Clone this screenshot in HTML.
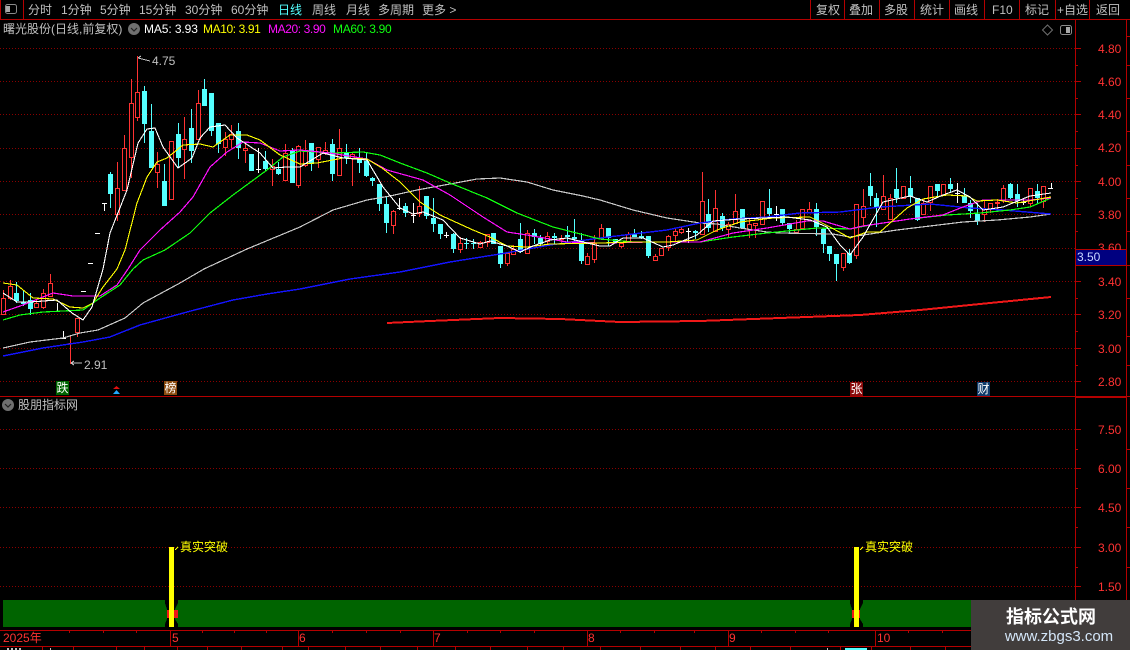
<!DOCTYPE html>
<html><head><meta charset="utf-8"><title>K线</title>
<style>
html,body{margin:0;padding:0;background:#000;}
#p{position:relative;width:1130px;height:650px;overflow:hidden;background:#000;font-family:"Liberation Sans","WenQuanYi Zen Hei","Noto Sans CJK SC",sans-serif;font-size:12px;color:#c0c0c0;}
#p div{position:absolute;white-space:nowrap;line-height:14px;}
svg{position:absolute;left:0;top:0;}
.r{color:#ff3232;left:1098px;}
.t{top:3px;}
.m{top:631px;color:#ff3232;}
.b{width:13px;height:14px;color:#fff;text-align:center;}
</style></head><body><div id="p">
<svg width="1130" height="650" viewBox="0 0 1130 650">
<g shape-rendering="crispEdges" fill="none">
<!-- grid -->
<path stroke="#8a0000" stroke-dasharray="1 2" d="M0 48.5H1075M0 81.5H1075M0 114.5H1075M0 148.5H1075M0 181.5H1075M0 214.5H1075M0 248.5H1075M0 281.5H1075M0 314.5H1075M0 348.5H1075M0 381.5H1075M0 429.5H1075M0 468.5H1075M0 507.5H1075M0 547.5H1075M0 586.5H1075"/>
<!-- red wicks -->
<path stroke="#ff3232" d="M3.5 290V315M10.5 280V300M36.5 300V307M43.5 289V309M50.5 274V297M70.5 335V364M77.5 318V337M117.5 162V221M124.5 135V190M131.5 79V178M137.5 56V121M157.5 152V188M184.5 117V179M198.5 90V139M225.5 132V156M231.5 125V148M245.5 144V163M272.5 159V186M285.5 144V180M298.5 145V188M305.5 140V167M318.5 147V168M325.5 142V155M339.5 129V175M352.5 153V186M393.5 210V234M419.5 186V217M460.5 237V253M480.5 241V248M487.5 234V247M507.5 252V266M513.5 245V255M527.5 230V254M547.5 232V244M561.5 235V244M587.5 253V264M594.5 235V263M601.5 224V240M621.5 243V248M628.5 232V242M655.5 254V261M668.5 235V251M675.5 229V242M681.5 227V234M702.5 172V234M715.5 190V231M728.5 222V238M735.5 194V223M749.5 219V238M755.5 223V238M796.5 220V232M809.5 202V213M843.5 253V271M856.5 204V259M863.5 189V227M883.5 175V209M890.5 194V219M923.5 199V214M930.5 186V211M984.5 200V222M990.5 203V213M997.5 199V212M1003.5 185V203M1030.5 188V207M1043.5 186V208"/>
<!-- red bodies -->
<path stroke="#ff3232" fill="#000" d="M1.5 298.5h4v16h-4zM8.5 286.5h4v12h-4zM34.5 303.5h4v4h-4zM41.5 293.5h4v14h-4zM48.5 283.5h4v13h-4zM68.5 343.5h4v0h-4zM75.5 318.5h4v14h-4zM115.5 188.5h4v26h-4zM122.5 148.5h4v42h-4zM129.5 103.5h4v54h-4zM135.5 92.5h4v25h-4zM155.5 164.5h4v8h-4zM169.5 141.5h4v58h-4zM182.5 139.5h4v10h-4zM196.5 103.5h4v36h-4zM223.5 139.5h4v8h-4zM229.5 134.5h4v5h-4zM243.5 148.5h4v2h-4zM270.5 166.5h4v3h-4zM283.5 153.5h4v27h-4zM296.5 146.5h4v39h-4zM303.5 150.5h4v15h-4zM316.5 147.5h4v12h-4zM323.5 150.5h4v3h-4zM337.5 148.5h4v27h-4zM350.5 154.5h4v4h-4zM391.5 211.5h4v14h-4zM417.5 206.5h4v7h-4zM458.5 243.5h4v6h-4zM478.5 242.5h4v5h-4zM485.5 234.5h4v8h-4zM505.5 253.5h4v10h-4zM511.5 249.5h4v5h-4zM525.5 233.5h4v20h-4zM545.5 236.5h4v5h-4zM559.5 238.5h4v1h-4zM585.5 256.5h4v8h-4zM592.5 243.5h4v16h-4zM599.5 228.5h4v10h-4zM619.5 243.5h4v3h-4zM626.5 234.5h4v8h-4zM653.5 256.5h4v4h-4zM659.5 248.5h4v7h-4zM666.5 236.5h4v11h-4zM673.5 231.5h4v4h-4zM679.5 229.5h4v3h-4zM700.5 201.5h4v33h-4zM713.5 208.5h4v23h-4zM726.5 224.5h4v5h-4zM733.5 211.5h4v12h-4zM747.5 224.5h4v5h-4zM753.5 223.5h4v2h-4zM760.5 201.5h4v23h-4zM794.5 229.5h4v3h-4zM800.5 209.5h4v19h-4zM807.5 209.5h4v3h-4zM841.5 253.5h4v14h-4zM854.5 204.5h4v51h-4zM861.5 206.5h4v11h-4zM881.5 196.5h4v13h-4zM888.5 198.5h4v21h-4zM901.5 186.5h4v12h-4zM921.5 203.5h4v11h-4zM928.5 186.5h4v16h-4zM941.5 184.5h4v11h-4zM982.5 209.5h4v5h-4zM988.5 203.5h4v6h-4zM995.5 202.5h4v1h-4zM1001.5 188.5h4v12h-4zM1028.5 188.5h4v15h-4zM1041.5 186.5h4v15h-4z"/>
<!-- cyan wicks -->
<path stroke="#54ffff" d="M16.5 282V303M23.5 291V306M30.5 293V315M110.5 172V208M144.5 86V143M151.5 104V168M164.5 164V206M178.5 123V167M191.5 109V163M204.5 79V106M211.5 93V136M218.5 123V153M238.5 123V159M265.5 151V171M278.5 162V175M292.5 148V183M311.5 143V171M332.5 139V181M346.5 144V164M359.5 148V173M366.5 153V177M372.5 177V186M379.5 184V211M386.5 197V233M405.5 203V217M426.5 196V219M433.5 198V232M440.5 224V239M453.5 233V253M466.5 238V249M473.5 239V249M500.5 246V268M520.5 223V253M534.5 229V244M540.5 235V246M554.5 233V244M567.5 226V243M574.5 219V242M581.5 233V264M608.5 228V246M634.5 229V237M641.5 231V239M648.5 236V258M695.5 230V239M708.5 199V232M722.5 213V231M769.5 189V217M782.5 209V225M789.5 223V233M816.5 203V236M823.5 229V253M829.5 246V261M836.5 254V281M849.5 249V264M870.5 173V206M876.5 193V227M896.5 168V203M910.5 176V203M917.5 198V221M937.5 184V198M950.5 178V193M964.5 188V203M970.5 200V218M977.5 203V225M1010.5 183V199M1017.5 184V207M1037.5 184V203"/>
<!-- cyan bodies -->
<path fill="#54ffff" d="M14 293h5v8h-5zM21 302h5v2h-5zM28 300h5v9h-5zM108 174h5v20h-5zM142 91h5v33h-5zM149 131h5v37h-5zM162 181h5v25h-5zM176 134h5v24h-5zM189 128h5v23h-5zM202 89h5v17h-5zM209 93h5v38h-5zM216 123h5v21h-5zM236 131h5v17h-5zM249 154h5v17h-5zM263 161h5v8h-5zM276 169h5v5h-5zM290 151h5v32h-5zM309 143h5v21h-5zM330 144h5v30h-5zM344 153h5v5h-5zM357 158h5v5h-5zM364 161h5v15h-5zM370 178h5v3h-5zM377 184h5v20h-5zM384 204h5v19h-5zM403 206h5v7h-5zM424 196h5v20h-5zM431 218h5v6h-5zM438 224h5v10h-5zM451 234h5v15h-5zM464 243h5v1h-5zM471 243h5v1h-5zM491 233h5v11h-5zM498 246h5v18h-5zM518 239h5v13h-5zM532 233h5v4h-5zM538 238h5v6h-5zM552 236h5v2h-5zM565 235h5v2h-5zM572 237h5v2h-5zM579 240h5v21h-5zM606 228h5v10h-5zM613 239h5v4h-5zM632 234h5v3h-5zM639 236h5v2h-5zM646 236h5v20h-5zM693 231h5v2h-5zM706 214h5v14h-5zM720 216h5v12h-5zM740 209h5v19h-5zM767 208h5v6h-5zM780 209h5v14h-5zM787 223h5v6h-5zM814 209h5v18h-5zM821 229h5v15h-5zM827 246h5v8h-5zM834 254h5v10h-5zM847 253h5v10h-5zM868 186h5v10h-5zM874 198h5v9h-5zM894 189h5v9h-5zM908 188h5v9h-5zM915 198h5v22h-5zM935 184h5v7h-5zM948 184h5v5h-5zM962 196h5v7h-5zM968 203h5v8h-5zM975 214h5v7h-5zM1008 184h5v14h-5zM1015 194h5v7h-5zM1035 191h5v7h-5z"/>
<!-- white dojis -->
<path stroke="#fff" d="M57.5 303V311M63.5 331V338M60 338.5H66M81 291.5H86M88 263.5H93M95 233.5H100M104.5 203V211M102 203.5H107M258.5 148V173M256 169.5H261M399.5 198V210M397 208.5H402M413.5 203V223M411 215.5H416M446.5 232V238M444 235.5H449M688.5 228V243M686 231.5H691M776.5 206V221M774 214.5H779M957.5 183V203M955 193.5H960M1023.5 199V205M1021 202.5H1026M1051.5 183V188M1048 188.5H1053"/>
<!-- long MAs -->
<polyline stroke="#c8c8c8" stroke-width="1.2" points="3,348 30,342 63,338 80,333 98,330 125,318 143,303 180,283 204,269 247,249 300,227 333,210 367,200 390,196 417,190 450,184 477,179 500,178 527,182 553,190 583,196 600,200 633,210 667,218 700,223 717,224 740,228 767,232 780,233 833,234 850,237 870,234 897,230 930,226 963,222 997,220 1030,217 1051,214"/>
<polyline stroke="#1414ff" stroke-width="1.4" points="3,356 43,348 83,342 110,337 140,325 187,312 233,300 267,294 300,289 350,279 400,272 450,262 500,254 550,245 600,238 633,234 667,230 700,223 733,219 767,217 800,213 840,212 880,207 930,204 970,208 1003,210 1051,214"/>
<polyline stroke="#f01818" stroke-width="2" points="387,323 430,321 500,318 560,319 620,322 700,321 780,318 860,315 920,310 980,304 1051,297"/>
<polyline stroke="#10ff10" stroke-width="1.2" points="3,320 20,315 43,312 83,310 100,298 120,285 133,269 143,260 165,250 190,233 210,213 233,195 267,170 283,157 300,151 333,153 363,152 380,155 400,163 427,173 450,183 487,198 517,213 553,227 600,239 633,242 700,242 733,237 767,233 817,228 850,229 870,225 910,219 947,215 980,213 1010,210 1030,207 1051,198"/>
<polyline stroke="#ff10ff" stroke-width="1.2" points="3,312 23,305 53,293 73,296 100,296 117,285 128,269 140,250 160,230 180,212 193,197 210,167 227,152 243,142 260,143 280,151 300,150 330,153 367,159 387,170 423,180 450,195 483,217 507,232 527,235 567,242 600,243 650,242 700,242 733,233 767,228 807,221 823,221 850,229 863,226 910,219 943,215 963,207 983,200 1030,200 1051,198"/>
<polyline stroke="#ffff00" stroke-width="1.1" points="3,283 17,285 33,298 53,299 70,307 83,308 93,303 103,287 117,269 125,250 137,203 147,177 157,162 167,158 183,145 200,144 213,147 230,135 247,135 260,140 280,155 300,164 317,163 343,158 367,159 382,168 400,182 420,202 440,215 473,230 490,237 507,246 527,247 550,244 600,243 633,242 667,242 697,240 717,230 740,222 773,218 810,217 830,227 850,238 867,232 880,232 907,208 923,199 947,195 967,196 977,201 997,200 1017,203 1051,197"/>
<polyline stroke="#ffffff" stroke-width="1.1" points="3,293 17,302 30,302 57,300 72,313 83,320 92,307 103,269 110,233 127,190 138,143 147,129 155,128 163,147 178,168 192,158 200,138 210,127 225,125 237,138 260,153 273,168 287,167 300,167 323,153 343,158 367,160 383,187 400,208 413,214 423,212 443,220 460,238 480,244 490,241 507,246 520,252 533,246 550,240 567,238 583,242 600,246 610,246 623,238 643,238 663,247 673,245 697,235 713,221 740,219 763,218 787,217 810,220 827,227 840,245 850,255 863,237 883,202 910,196 927,202 943,195 957,190 970,197 983,210 1003,207 1030,196 1051,193"/>
<!-- high/low markers -->
<path stroke="#c0c0c0" d="M138 58L150 61M138 58L141 56M71 363H82M71 363L74 361M71 363L74 365"/>
<!-- lower panel -->
<path fill="#006400" d="M3 600H165V603L167 609V619L165 624V627H3zM178 600H850V603L852 609V619L850 624V627H863V624L860 619V609L863 603V600H975V627H178V624L175 619V609L178 603z"/>
<path fill="#f01818" d="M167 610H178V618H167zM852 610H860V618H852z"/>
<path fill="#ffff00" d="M169 547H174V627H169zM854 547H859V627H854z"/>
<path stroke="#ffff00" d="M175 550L178 547M860 550L863 547"/>
<!-- frame -->
<path stroke="#b40000" d="M0 19.5H1130M23.5 0V19M0.5 0V19M810.5 0V19M844.5 0V19M879.5 0V19M914.5 0V19M949.5 0V19M984.5 0V19M1019.5 0V19M1055.5 0V19M1089.5 0V19M1075.5 19V630M1126.5 19V630M0 396.5H1130M1075 397.5H1127M0 630.5H1130M0 646.5H1130"/>
<!-- axis ticks -->
<path stroke="#b40000" d="M1075 48.5H1081M1075 81.5H1081M1075 114.5H1081M1075 148.5H1081M1075 181.5H1081M1075 214.5H1081M1075 281.5H1081M1075 314.5H1081M1075 348.5H1081M1075 381.5H1081M1075 65.5H1078M1075 98.5H1078M1075 131.5H1078M1075 165.5H1078M1075 198.5H1078M1075 231.5H1078M1075 298.5H1078M1075 331.5H1078M1075 365.5H1078M1075 429.5H1081M1075 468.5H1081M1075 507.5H1081M1075 547.5H1081M1075 586.5H1081M1075 449.5H1078M1075 488.5H1078M1075 527.5H1078M1075 567.5H1078M1075 606.5H1078M1126 36.5H1130M1126 65.5H1130M1126 98.5H1130M1126 131.5H1130M1126 165.5H1130M1126 198.5H1130M1126 231.5H1130M1126 265.5H1130M1126 298.5H1130M1126 336.5H1130M1126 365.5H1130M1126 449.5H1130M1126 488.5H1130M1126 527.5H1130M1126 567.5H1130M1126 606.5H1130"/>
<path stroke="#b40000" d="M170.5 630V646M298.5 630V646M433.5 630V646M587.5 630V646M728.5 630V646M875.5 630V646M69.5 630V633M103.5 630V633M136.5 630V633M202.5 630V633M234.5 630V633M266.5 630V633M332.5 630V633M366.5 630V633M400.5 630V633M467.5 630V633M500.5 630V633M534.5 630V633M620.5 630V633M654.5 630V633M694.5 630V633M761.5 630V633M795.5 630V633M828.5 630V633M908.5 630V633M942.5 630V633M42.5 646V650M73.5 646V650M116.5 646V650M144.5 646V650M177.5 646V650M207.5 646V650M241.5 646V650M282.5 646V650M308.5 646V650M345.5 646V650M380.5 646V650M417.5 646V650M455.5 646V650M490.5 646V650M527.5 646V650M563.5 646V650M600.5 646V650M640.5 646V650M680.5 646V650M715.5 646V650M750.5 646V650M790.5 646V650M840.5 646V650M871.5 646V650M910.5 646V650M945.5 646V650"/>
<path fill="#c0c0c0" d="M7 648h2v2h-2zM11 648h2v2h-2zM15 648h2v2h-2zM19 648h2v2h-2zM50 648h1v2h-1zM827 648h1v2h-1z"/>
<path fill="#54ffff" d="M845 648h22v2h-22z"/>
<!-- price tag -->
<path fill="#000080" stroke="#b40000" d="M1075.5 249.5H1126.5V265.5H1075.5z"/>
</g>
<!-- top icons -->
<rect x="5.500" y="4.500" width="11" height="9" rx="2" fill="none" stroke="#8a8a8a"/><rect x="6" y="6" width="4" height="6" fill="#a8a8a8"/>
<rect x="1060.500" y="25.500" width="11" height="9" rx="2" fill="none" stroke="#8a8a8a"/><rect x="1066" y="27" width="4" height="6" fill="#a8a8a8"/>
<path d="M1047.500 25L1052.500 30L1047.500 35L1042.500 30Z" fill="none" stroke="#707070"/>
<circle cx="134" cy="29" r="6" fill="#707070"/><path d="M131 28L134 31L137 28" fill="none" stroke="#222" stroke-width="1.2"/>
<circle cx="8" cy="405" r="6" fill="#707070"/><path d="M5 404L8 407L11 404" fill="none" stroke="#222" stroke-width="1.2"/>
<!-- arrows -->
<path d="M116.500 386L120 389H113Z" fill="#e01010"/><path d="M116.500 390L120 394H113Z" fill="#20a8ff"/>
<rect x="971" y="600" width="159" height="50" fill="#413d3c"/>
</svg>

<div class="t" style="left:28px">分时</div>
<div class="t" style="left:61px">1分钟</div>
<div class="t" style="left:100px">5分钟</div>
<div class="t" style="left:139px">15分钟</div>
<div class="t" style="left:185px">30分钟</div>
<div class="t" style="left:231px">60分钟</div>
<div class="t" style="left:278px;color:#54ffff">日线</div>
<div class="t" style="left:312px">周线</div>
<div class="t" style="left:346px">月线</div>
<div class="t" style="left:378px">多周期</div>
<div class="t" style="left:422px">更多 &gt;</div>
<div class="t" style="left:816px">复权</div>
<div class="t" style="left:849px">叠加</div>
<div class="t" style="left:884px">多股</div>
<div class="t" style="left:920px">统计</div>
<div class="t" style="left:954px">画线</div>
<div class="t" style="left:992px">F10</div>
<div class="t" style="left:1025px">标记</div>
<div class="t" style="left:1057px">+自选</div>
<div class="t" style="left:1096px">返回</div>

<div style="left:3px;top:22px">曙光股份(日线,前复权)</div>
<div style="left:144px;top:22px;color:#fff;letter-spacing:-0.1px">MA5: 3.93</div>
<div style="left:203px;top:22px;color:#ffff00;letter-spacing:-0.4px">MA10: 3.91</div>
<div style="left:268px;top:22px;color:#ff10ff;letter-spacing:-0.4px">MA20: 3.90</div>
<div style="left:333px;top:22px;color:#10ff10;letter-spacing:-0.3px">MA60: 3.90</div>
<div style="left:152px;top:54px">4.75</div>
<div style="left:84px;top:358px">2.91</div>

<div class="r" style="top:42px">4.80</div>
<div class="r" style="top:75px">4.60</div>
<div class="r" style="top:108px">4.40</div>
<div class="r" style="top:141px">4.20</div>
<div class="r" style="top:175px">4.00</div>
<div class="r" style="top:208px">3.80</div>
<div class="r" style="top:241px">3.60</div>
<div class="r" style="top:275px">3.40</div>
<div class="r" style="top:308px">3.20</div>
<div class="r" style="top:342px">3.00</div>
<div class="r" style="top:375px">2.80</div>
<div class="r" style="top:423px">7.50</div>
<div class="r" style="top:462px">6.00</div>
<div class="r" style="top:501px">4.50</div>
<div class="r" style="top:541px">3.00</div>
<div class="r" style="top:580px">1.50</div>
<div style="left:1076px;top:250px;width:49px;height:15px;background:#000080;color:#c8d4ff;padding-left:1px">3.50</div>

<div class="b" style="left:56px;top:381px;background:#006400">跌</div>
<div class="b" style="left:164px;top:381px;background:#8b4c10">榜</div>
<div class="b" style="left:850px;top:382px;background:#8a0a0a">张</div>
<div class="b" style="left:977px;top:382px;background:#0f3a6a">财</div>

<div style="left:18px;top:398px">股朋指标网</div>
<div style="left:180px;top:540px;color:#ffff00">真实突破</div>
<div style="left:865px;top:540px;color:#ffff00">真实突破</div>

<div class="m" style="left:3px">2025年</div>
<div class="m" style="left:172px">5</div>
<div class="m" style="left:299px">6</div>
<div class="m" style="left:434px">7</div>
<div class="m" style="left:588px">8</div>
<div class="m" style="left:729px">9</div>
<div class="m" style="left:877px">10</div>

<div style="left:1006px;top:607px;font-size:18px;line-height:20px;font-weight:bold;color:#fff">指标公式网</div>
<div style="left:994px;top:628px;font-size:15px;line-height:17px;color:#d4e6f8;width:130px;text-align:center">www.zbgs3.com</div>
</div></body></html>
